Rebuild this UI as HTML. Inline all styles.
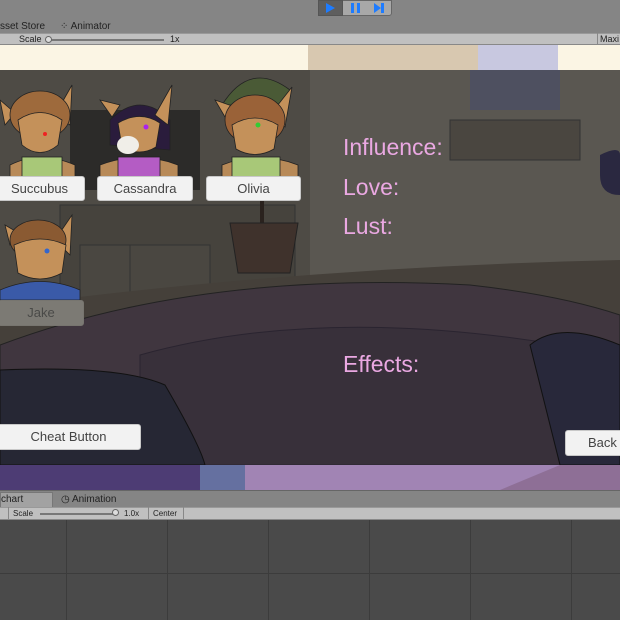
<!DOCTYPE html>
<html><head><meta charset="utf-8"><style>
*{margin:0;padding:0;box-sizing:border-box}
body{width:620px;height:620px;overflow:hidden;background:#808080;font-family:"Liberation Sans",sans-serif;position:relative}
.abs{position:absolute}
.btn{position:absolute;background:#f2f2f2;border:1px solid #c8c8c8;border-radius:3px;color:#444;font-size:13px;text-align:center;line-height:24px}
.pink{position:absolute;color:#eaa8e2;font-size:23px;left:343px}
.small{font-size:10px;color:#222}
</style></head><body>
<div class="abs" style="left:0;top:0;width:620px;height:33px;background:#858585"></div>
<div class="abs" style="left:318px;top:0;width:74px;height:16px;background:#a8a8a8;border:1px solid #666;border-radius:0 0 3px 3px"></div>
<div class="abs" style="left:318px;top:0;width:25px;height:16px;background:#5e5e5e;border:1px solid #555"></div>
<svg class="abs" style="left:318px;top:0" width="74" height="16"><polygon points="8,3 8,13 17,8" fill="#1e7cff"/><rect x="33" y="3" width="3" height="10" fill="#1e7cff"/><rect x="39" y="3" width="3" height="10" fill="#1e7cff"/><polygon points="56,3 56,13 63,8" fill="#1e7cff"/><rect x="63" y="3" width="3" height="10" fill="#1e7cff"/></svg>
<div class="abs small" style="left:0;top:21px">sset Store</div>
<div class="abs small" style="left:60px;top:21px">⁘ Animator</div>
<div class="abs" style="left:0;top:33px;width:620px;height:12px;background:#c0c0c0;border-top:1px solid #999;border-bottom:1px solid #888"></div>
<div class="abs small" style="left:19px;top:34px;font-size:9px">Scale</div>
<div class="abs" style="left:48px;top:39px;width:116px;height:2px;background:#777"></div>
<div class="abs" style="left:45px;top:36px;width:7px;height:7px;border-radius:50%;background:#ddd;border:1px solid #666"></div>
<div class="abs small" style="left:170px;top:34px;font-size:9px">1x</div>
<div class="abs" style="left:597px;top:33px;width:1px;height:12px;background:#888"></div>
<div class="abs small" style="left:600px;top:34px;font-size:9px">Maxi</div>
<svg class="abs" style="left:0;top:45px" width="620" height="445">
<rect width="620" height="445" fill="#fbf5e4"/>
<rect x="308" y="0" width="170" height="30" fill="#d8c8b0"/>
<rect x="478" y="0" width="80" height="30" fill="#c8c8e0"/>
<rect y="25" width="620" height="395" fill="#5a5751"/>
<rect x="0" y="25" width="310" height="230" fill="#4e4b45"/>
<rect x="70" y="65" width="130" height="80" fill="#2c2b29"/>
<rect x="60" y="160" width="235" height="95" fill="#46433d" stroke="#333"/>
<rect x="80" y="200" width="50" height="55" fill="#4a4741" stroke="#333"/>
<rect x="130" y="200" width="80" height="55" fill="#4a4741" stroke="#333"/>
<rect x="470" y="25" width="90" height="40" fill="#4e5060"/>
<rect x="450" y="75" width="130" height="40" fill="#4a4640" stroke="#333"/>
<path d="M262 130 L262 180" stroke="#2a221e" stroke-width="4"/>
<path d="M230 178 L298 178 L290 228 L238 228 Z" fill="#3f322c" stroke="#222"/>
<path d="M0 262 Q300 222 620 215 L620 420 L0 420 Z" fill="#45403a"/>
<path d="M0 300 Q200 225 470 240 Q560 250 620 270 L620 420 L0 420 Z" fill="#40363f" stroke="#222"/>
<path d="M140 310 Q320 260 560 300 L620 320 L620 420 L140 420 Z" fill="#38303a" stroke="#2a2430"/>
<path d="M0 325 Q120 320 165 340 Q200 400 205 420 L0 420 Z" fill="#262734" stroke="#111"/>
<path d="M530 300 Q560 275 620 300 L620 420 L560 420 Z" fill="#28283a" stroke="#111"/>
<path d="M600 110 Q620 100 620 110 L620 150 Q600 150 600 130Z" fill="#2a2840"/>
<rect y="420" width="620" height="25" fill="#a184b4"/>
<rect y="420" width="240" height="25" fill="#4d3c74"/>
<rect x="200" y="420" width="45" height="25" fill="#6570a0"/>
<path d="M500 445 L560 420 L620 420 L620 445Z" fill="#8e6f96"/>
<g stroke="#222" stroke-width="0.8">
<!-- Succubus -->
<path d="M10 120 Q40 105 75 120 L75 132 L10 132Z" fill="#b88a58"/>
<rect x="22" y="112" width="40" height="20" fill="#a8c878"/>
<polygon points="55,70 72,40 70,80" fill="#c4915a"/><polygon points="5,80 0,55 15,68" fill="#c4915a"/>
<ellipse cx="40" cy="70" rx="30" ry="24" fill="#9e6a3c"/>
<path d="M18 75 Q40 60 62 75 L58 100 Q40 115 22 100Z" fill="#c4915a"/>
<!-- Cassandra -->
<path d="M100 120 Q140 105 178 120 L178 132 L100 132Z" fill="#b88a58"/>
<rect x="118" y="112" width="42" height="20" fill="#b45cc4"/>
<path d="M110 75 Q140 45 170 75 L170 105 L110 100Z" fill="#2a1c3c"/>
<polygon points="155,70 172,40 168,80" fill="#c4915a"/><polygon points="112,72 100,55 120,60" fill="#c4915a"/>
<path d="M118 78 Q140 65 160 78 L156 102 Q140 112 122 102Z" fill="#c4915a"/>
<ellipse cx="128" cy="100" rx="11" ry="9" fill="#f0eee8" stroke="none"/>
<!-- Olivia -->
<path d="M222 120 Q260 105 298 120 L298 132 L222 132Z" fill="#b88a58"/>
<rect x="232" y="112" width="48" height="20" fill="#a8c878"/>
<path d="M222 60 Q250 15 290 45 L280 60Z" fill="#4a5a36"/>
<polygon points="270,70 292,42 285,82" fill="#c4915a"/><polygon points="225,72 215,55 235,62" fill="#c4915a"/>
<ellipse cx="255" cy="75" rx="30" ry="25" fill="#9a6238"/>
<path d="M232 80 Q255 66 278 80 L274 104 Q255 115 236 104Z" fill="#c4915a"/>
<!-- Jake -->
<path d="M0 245 Q40 228 80 245 L80 255 L0 255Z" fill="#3a5aa8"/>
<polygon points="55,195 72,170 70,210" fill="#c4915a"/><polygon points="10,200 5,180 22,190" fill="#c4915a"/>
<ellipse cx="38" cy="195" rx="28" ry="20" fill="#8a5a32"/>
<path d="M14 200 Q40 188 66 200 L62 228 Q40 240 18 228Z" fill="#c4915a"/>
</g>
<circle cx="45" cy="89" r="2" fill="#e22"/><circle cx="146" cy="82" r="2.5" fill="#a2e"/><circle cx="258" cy="80" r="2.5" fill="#3c3"/><circle cx="47" cy="206" r="2.5" fill="#36c"/>
</svg>
<div class="btn" style="left:-6px;top:176px;width:91px;height:25px">Succubus</div>
<div class="btn" style="left:97px;top:176px;width:96px;height:25px">Cassandra</div>
<div class="btn" style="left:206px;top:176px;width:95px;height:25px">Olivia</div>
<div class="btn" style="left:-2px;top:300px;width:86px;height:26px;background:#7c7a74;border-color:#77756f;color:#4a4a48">Jake</div>
<div class="btn" style="left:-4px;top:424px;width:145px;height:26px">Cheat Button</div>
<div class="btn" style="left:565px;top:430px;width:70px;height:26px;text-align:left;padding-left:22px">Back</div>
<div class="pink" style="top:134px">Influence:</div>
<div class="pink" style="top:174px">Love:</div>
<div class="pink" style="top:213px">Lust:</div>
<div class="pink" style="top:351px">Effects:</div>
<div class="abs" style="left:0;top:490px;width:620px;height:17px;background:#858585;border-top:1px solid #666"></div>
<div class="abs" style="left:0;top:492px;width:53px;height:15px;background:#a2a2a2;border:1px solid #777;border-bottom:none"></div>
<div class="abs small" style="left:1px;top:494px">chart</div>
<div class="abs small" style="left:61px;top:494px">◷ Animation</div>
<div class="abs" style="left:0;top:507px;width:620px;height:13px;background:#c0c0c0;border-top:1px solid #999;border-bottom:1px solid #888"></div>
<div class="abs" style="left:8px;top:507px;width:1px;height:13px;background:#888"></div>
<div class="abs small" style="left:13px;top:509px;font-size:8px">Scale</div>
<div class="abs" style="left:40px;top:513px;width:76px;height:2px;background:#777"></div>
<div class="abs" style="left:112px;top:509px;width:7px;height:7px;border-radius:50%;background:#ddd;border:1px solid #666"></div>
<div class="abs small" style="left:124px;top:509px;font-size:8px">1.0x</div>
<div class="abs" style="left:148px;top:507px;width:1px;height:13px;background:#888"></div>
<div class="abs small" style="left:153px;top:509px;font-size:8px">Center</div>
<div class="abs" style="left:183px;top:507px;width:1px;height:13px;background:#888"></div>
<svg class="abs" style="left:0;top:520px" width="620" height="100">
<rect width="620" height="100" fill="#4a4a4a"/>
<g stroke="#3c3c3c" stroke-width="1">
<line x1="66.5" y1="0" x2="66.5" y2="100"/><line x1="167.5" y1="0" x2="167.5" y2="100"/><line x1="268.5" y1="0" x2="268.5" y2="100"/><line x1="369.5" y1="0" x2="369.5" y2="100"/><line x1="470.5" y1="0" x2="470.5" y2="100"/><line x1="571.5" y1="0" x2="571.5" y2="100"/><line x1="0" y1="53.5" x2="620" y2="53.5"/>
</g></svg>
</body></html>
